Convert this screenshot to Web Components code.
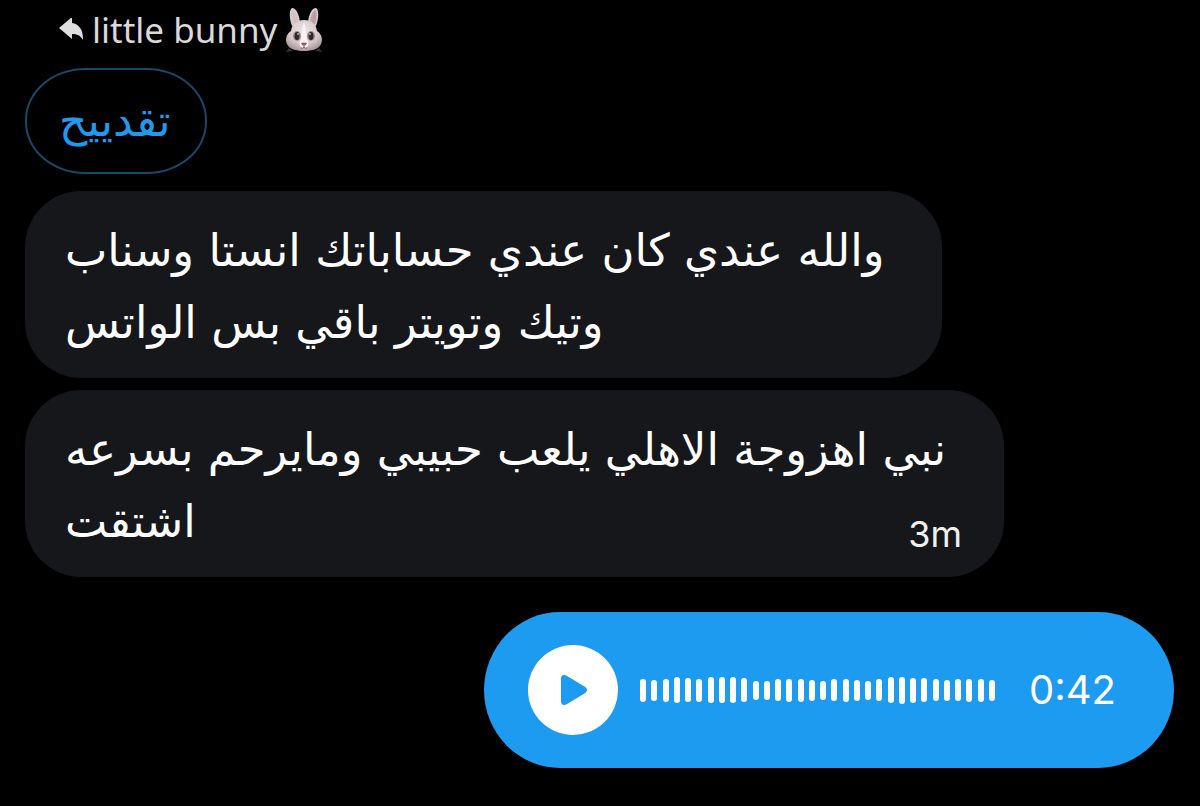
<!DOCTYPE html>
<html lang="ar">
<head>
<meta charset="utf-8">
<meta name="viewport" content="width=device-width, initial-scale=1">
<title>Chat</title>
<style>
  body { margin: 0; background: #000; }
</style>
</head>
<body>
<chat-thread>
  <reply-label>little bunny</reply-label>
  <quoted-message>تقدييح</quoted-message>
  <chat-bubble>
    <span>والله عندي كان عندي حساباتك انستا وسناب</span>
    <span>وتيك وتويتر باقي بس الواتس</span>
  </chat-bubble>
  <chat-bubble time="3m">
    <span>نبي اهزوجة الاهلي يلعب حبيبي ومايرحم بسرعه</span>
    <span>اشتقت</span>
  </chat-bubble>
  <voice-message duration="0:42"></voice-message>
</chat-thread>
<script>
const define = (name, html, setup) => {
  const template = document.createElement('template');
  template.innerHTML = html;
  customElements.define(name, class extends HTMLElement {
    constructor() {
      super();
      this.attachShadow({ mode: 'open' }).append(template.content.cloneNode(true));
    }
    connectedCallback() { if (setup) setup(this, this.shadowRoot); }
  });
};

define('chat-thread', `
<style>
  :host { display: block; background: #000; font-family: Inter, "DejaVu Sans", sans-serif; }
  main { display: flex; flex-direction: column; align-items: flex-start; min-height: 100vh; box-sizing: border-box; padding: 0 26px 0 25px; }
</style>
<main><slot></slot></main>`);

define('reply-label', `
<style>
  :host { display: flex; align-items: center; height: 60px; padding-left: 34px; margin-bottom: 8px; color: #d9d9d9; font: 35px/60px "Noto Sans", sans-serif; direction: ltr; }
  .arrow { width: 25px; height: 24px; margin-right: 8px; }
  .bunny { width: 40px; height: 46px; margin-left: 7px; }
</style>
<svg class="arrow" viewBox="0 0 25 24" aria-hidden="true"><path fill="#dedede" d="M0 10 13 -1v6C20 6 24.500 12 24 22 21.500 17.500 18 16 13 16V21Z"/></svg>
<slot></slot>
<svg class="bunny" viewBox="0 0 40 46" role="img" aria-label="Rabbit">
  <defs>
    <radialGradient id="fur" cx=".5" cy=".35" r=".65"><stop offset="0" stop-color="#eee5e5"/><stop offset=".65" stop-color="#d6c8ca"/><stop offset="1" stop-color="#ad979b"/></radialGradient>
    <linearGradient id="ear" x2="1"><stop offset="0" stop-color="#d4c6c7"/><stop offset=".5" stop-color="#d9aeb1"/><stop offset="1" stop-color="#b39a9c"/></linearGradient>
  </defs>
  <path d="M5 41l-3 4 7-1M35 41l3 4-7-1" fill="#353034"/>
  <path d="M8 19C5 11 5 3 8 1c4-1 8 8 8 16ZM32 19c3-8 3-16 0-18-4-1-8 8-8 16Z" fill="#d8cbcd"/>
  <path d="M9 17C7 10 7 5 9 3c3 2 5 8 5 14ZM31 17c2-7 2-12 0-14-3 2-5 8-5 14Z" fill="url(#ear)"/>
  <path d="M20 13c8 0 12 4 13 11 5 3 6 9 4 13-2 5-9 7-17 7S5 42 3 37c-2-4-1-10 4-13 1-7 5-11 13-11Z" fill="url(#fur)"/>
  <path d="M20 15c2 4 2 11 3 17 3 5 1 9-3 9s-6-4-3-9c1-6 1-13 3-17Z" fill="#f7f1f1"/>
  <ellipse cx="13" cy="29" rx="4" ry="5" fill="#a39294"/><ellipse cx="27" cy="29" rx="4" ry="5" fill="#a39294"/>
  <ellipse cx="13" cy="29" rx="2.500" ry="4" fill="#2d282a"/><ellipse cx="27" cy="29" rx="2.500" ry="4" fill="#2d282a"/>
  <circle cx="14" cy="27" r="1" fill="#b9afb2"/><circle cx="26" cy="27" r="1" fill="#b9afb2"/>
  <path d="M17 36q3-1 6 0-1 3-3 3t-3-3Z" fill="#a05664"/><path d="M20 39v2m-3 0q2 1 3-1 1 2 3 1" stroke="#8c6870" fill="none"/>
</svg>`);

define('quoted-message', `
<style>
  :host { display: block; box-sizing: border-box; min-width: 182px; height: 106px; margin-bottom: 17px; padding: 0 32px; border: 2px solid #16486b; border-radius: 60px / 52px; color: #1d9bf0; font: 44px/102px "DejaVu Sans", sans-serif; direction: rtl; text-align: left; }
</style>
<slot></slot>`);

define('chat-bubble', `
<style>
  :host { display: block; position: relative; box-sizing: border-box; max-width: 100%; padding: 24px 58px 19px 40px; margin-bottom: 12px; border-radius: 56px; background: #16171a; color: #fff; font: 45px/72px "DejaVu Sans", sans-serif; direction: rtl; text-align: left; }
  ::slotted(span) { display: block; white-space: nowrap; }
  time { position: absolute; right: 42px; bottom: 22px; color: #f0f0f0; font: 36px/42px Inter, sans-serif; direction: ltr; }
</style>
<slot></slot><time hidden></time>`, (host, root) => {
  const time = root.querySelector('time');
  time.textContent = host.getAttribute('time') || '';
  time.hidden = !time.textContent;
});

define('voice-message', `
<style>
  :host { display: flex; align-items: center; align-self: flex-end; box-sizing: border-box; width: 690px; max-width: 100%; height: 156px; margin-top: 23px; padding: 0 58px 0 44px; border-radius: 76px / 78px; background: #1d9bf0; color: #fff; direction: ltr; }
  button { display: grid; place-items: center; flex: none; width: 90px; height: 90px; padding: 0; border: 0; border-radius: 50%; background: #fff; cursor: pointer; }
  .play { width: 26px; height: 32px; margin-left: 2px; }
  .wave { display: flex; flex: 1; align-items: center; justify-content: space-between; margin: 0 34px 0 22px; }
  .wave i { width: 6px; border-radius: 3px; background: #fff; }
  time { font: 40px/48px Inter, sans-serif; }
</style>
<button type="button" aria-label="Play"><svg class="play" viewBox="0 0 26 32"><path fill="#1d9bf0" d="M0 4.500C0 1 3 .2 6 2L23.500 12.500C26.800 14.500 26.800 17.500 23.500 19.500L6 30C3 31.800 0 31 0 27.500Z"/></svg></button>
<div class="wave" aria-hidden="true"></div>
<time></time>`, (host, root) => {
  root.querySelector('time').textContent = host.getAttribute('duration');
  const levels = [23,21,23,26,24,23,26,26,26,24,19,19,22,23,23,21,19,22,23,21,19,22,26,27,25,24,22,21,22,23,23,21];
  root.querySelector('.wave').replaceChildren(...levels.map(level => {
    const bar = document.createElement('i');
    bar.style.height = level + 'px';
    return bar;
  }));
});
</script>
</body>
</html>
